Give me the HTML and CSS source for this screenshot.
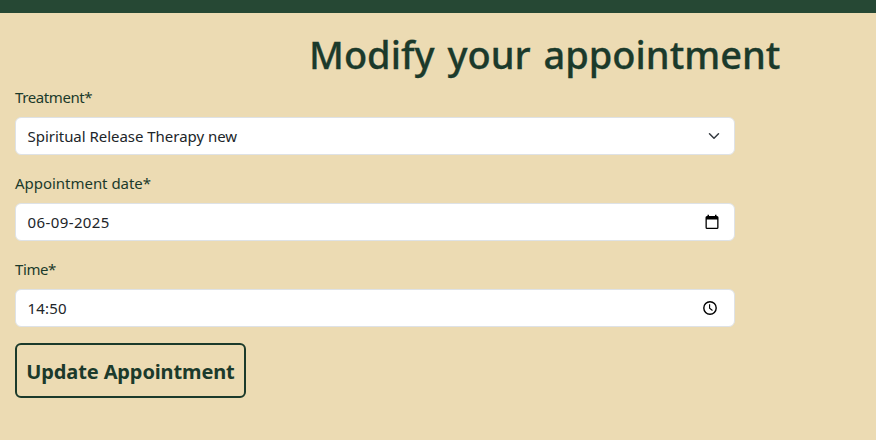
FILE: index.html
```html
<!DOCTYPE html>
<html lang="en">
<head>
<meta charset="utf-8">
<title>Modify your appointment</title>
<link rel="stylesheet" href="styles.css">
</head>
<body>
<header class="topbar"></header>
<main class="page">
  <h1 class="title">Modify your appointment</h1>
  <form class="form">
    <div class="field">
      <div class="label"><span class="t-treatment">Treatment*</span></div>
      <div class="control"><span class="t-value">Spiritual Release Therapy new</span>
        <svg class="chevron" width="12" height="12" viewBox="0 0 16 16"><path d="m2 5 6 6 6-6" fill="none" stroke="#343a40" stroke-width="2" stroke-linecap="round" stroke-linejoin="round"/></svg>
      </div>
    </div>
    <div class="field">
      <div class="label"><span class="t-date">Appointment date*</span></div>
      <div class="control"><span class="t-digits">06-09-2025</span>
        <svg class="calendar" width="16" height="16" viewBox="0 0 16 16"><path d="M3.500 .8H5V2h6V.8h1.500V2H13a1.500 1.500 0 0 1 1.500 1.500v10A1.500 1.500 0 0 1 13 15H3a1.500 1.500 0 0 1-1.500-1.500v-10A1.500 1.500 0 0 1 3 2h.5zM2.800 5.500v8.200h10.400V5.500z" fill="#000" fill-rule="evenodd"/></svg>
      </div>
    </div>
    <div class="field">
      <div class="label"><span class="t-time">Time*</span></div>
      <div class="control"><span class="t-time-value">14:50</span>
        <svg class="clock" width="16" height="16" viewBox="0 0 16 16"><g fill="none" stroke="#000"><circle cx="8" cy="8" r="6.200" stroke-width="1.400"/><path d="M7.600 4.300v4l2.900 2.200" stroke-width="1.100"/></g></svg>
      </div>
    </div>
    <button class="submit" type="button">Update Appointment</button>
  </form>
</main>
</body>
</html>
```
FILE: styles.css
```css
* { box-sizing: border-box; }
body {
  margin: 0;
  background: #ecdbb3;
  color: #1b3a2b;
  font: 15px/24px "Noto Sans", "Open Sans", sans-serif;
}
.topbar { height: 13px; background: #264834; }
.page { padding: 16px 15px 0; }
.title {
  margin: 0 0 8px;
  padding-left: 294px;
  height: 48px;
  font-size: 38px;
  font-weight: 500;
  line-height: 50px;
  word-spacing: 3px;
  -webkit-text-stroke: 0.3px #1b3a2b;
  color: #1b3a2b;
  white-space: nowrap;
}
.form { width: 720px; }
.field { margin-bottom: 16px; }
.label { height: 24px; margin-bottom: 8px; }
.control {
  display: flex;
  align-items: center;
  justify-content: space-between;
  height: 38px;
  padding: 0 12px 0 11.500px;
  background: #fff;
  border: 1px solid #dee2e6;
  border-radius: 6px;
  color: #212529;
}
.t-treatment { letter-spacing: -0.4px; }
.t-date { letter-spacing: -0.03px; }
.t-time { letter-spacing: -0.4px; }
.t-value { letter-spacing: -0.03px; }
.t-digits { letter-spacing: 0.4px; }
.t-time-value { letter-spacing: 0.2px; }
.chevron { margin-right: 2px; }
.calendar { margin-right: 2px; }
.clock { margin-right: 4px; }
.submit {
  width: 231px;
  height: 55px;
  padding: 2px 0 0;
  border: 2px solid #1b3a2b;
  border-radius: 6px;
  background: transparent;
  color: #1b3a2b;
  font: 700 20px/30px "Noto Sans", "Open Sans", sans-serif;
  letter-spacing: -0.13px;
  white-space: nowrap;
}
```
